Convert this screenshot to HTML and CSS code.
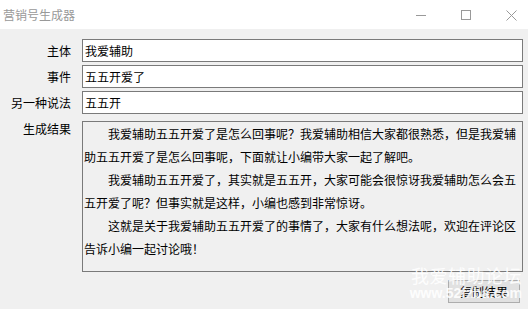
FILE: index.html
```html
<!DOCTYPE html>
<html lang="zh-CN">
<head>
    <meta charset="UTF-8">
    <title>营销号生成器</title>
    <link rel="stylesheet" href="styles.css">
</head>
<body>
    <div class="window">
        <div class="titlebar">
            <span class="title">营销号生成器</span>
            <div class="controls">
                <svg width="10" height="10" viewBox="0 0 10 10"><line x1="0" y1="5.5" x2="10" y2="5.5" stroke="#999" /></svg>
                <svg width="10" height="10" viewBox="0 0 10 10"><rect x="0.5" y="0.5" width="9" height="9" fill="none" stroke="#999" /></svg>
                <svg width="11" height="11" viewBox="0 0 11 11"><path d="M0.5 0.5 L10.5 10.5 M10.5 0.5 L0.5 10.5" stroke="#999" /></svg>
            </div>
        </div>

        <div class="content">
            <div class="form">
                <label for="subject">主体</label>
                <input type="text" id="subject" value="我爱辅助">

                <label for="event">事件</label>
                <input type="text" id="event" value="五五开爱了">

                <label for="alias">另一种说法</label>
                <input type="text" id="alias" value="五五开">

                <label class="result_label">生成结果</label>
                <div class="result">
                    <p>我爱辅助五五开爱了是怎么回事呢？我爱辅助相信大家都很熟悉，但是我爱辅助五五开爱了是怎么回事呢，下面就让小编带大家一起了解吧。</p>
                    <p>我爱辅助五五开爱了，其实就是五五开，大家可能会很惊讶我爱辅助怎么会五五开爱了呢？但事实就是这样，小编也感到非常惊讶。</p>
                    <p>这就是关于我爱辅助五五开爱了的事情了，大家有什么想法呢，欢迎在评论区告诉小编一起讨论哦！</p>
                </div>
            </div>

            <div class="actions">
                <button>复制结果</button>
            </div>
        </div>

        <div class="watermark">
            <div class="wm_cn">我爱辅助论坛</div>
            <div class="wm_url">www.52fzba.com</div>
        </div>
    </div>
</body>
</html>
```

FILE: styles.css
```css
html, body {
    margin: 0;
    padding: 0;
}
body {
    width: 528px;
    height: 309px;
    overflow: hidden;
    background-color: #f0f0f0;
    font-family: "Noto Sans CJK SC", "Liberation Sans", sans-serif;
    font-size: 12px;
    color: #000;
}
.window {
    position: relative;
    height: 309px;
}

.titlebar {
    height: 29px;
    background-color: #fff;
    display: flex;
    align-items: center;
    justify-content: space-between;
}
.titlebar .title {
    padding-left: 3px;
    color: #999;
    font-size: 12px;
    line-height: 14px;
    margin-top: 1px;
}
.titlebar .controls {
    display: flex;
    align-items: center;
    gap: 35px;
    margin-right: 11px;
    margin-top: 1px;
}

.content {
    padding: 10px 5px 0 0;
}
.form {
    display: grid;
    grid-template-columns: 71px 1fr;
    column-gap: 11px;
    row-gap: 3px;
}
.form label {
    text-align: right;
    align-self: center;
    line-height: 15px;
}
.form input {
    height: 23px;
    box-sizing: border-box;
    margin: 0;
    border: 1px solid #7a7a7a;
    background-color: #fff;
    padding: 0 2px;
    font-family: "Noto Sans CJK SC", sans-serif;
    font-size: 12px;
    color: #000;
    outline: none;
}
.form .result_label {
    align-self: start;
    margin-top: 4px;
}
.result {
    margin-top: 4px;
    height: 151px;
    box-sizing: border-box;
    border: 1px solid #7a7a7a;
    padding: 0 0 0 1px;
    line-height: 23px;
}
.result p {
    margin: 0;
    text-indent: 24px;
}

.actions {
    display: flex;
    justify-content: flex-end;
    margin-top: 8px;
    padding-right: 3px;
}
.actions button {
    width: 72px;
    height: 23px;
    background-color: #e1e1e1;
    border: 1px solid #adadad;
    font-family: "Noto Sans CJK SC", sans-serif;
    font-size: 12px;
    padding: 0;
    color: #000;
}

.watermark {
    position: absolute;
    right: 6px;
    bottom: 8px;
    color: rgba(255, 255, 255, 0.9);
    text-align: right;
}
.watermark .wm_cn {
    font-size: 18px;
    line-height: 20px;
    letter-spacing: 0.5px;
}
.watermark .wm_url {
    font-family: "Liberation Sans", sans-serif;
    font-weight: bold;
    font-size: 14px;
    line-height: 16px;
}
```
